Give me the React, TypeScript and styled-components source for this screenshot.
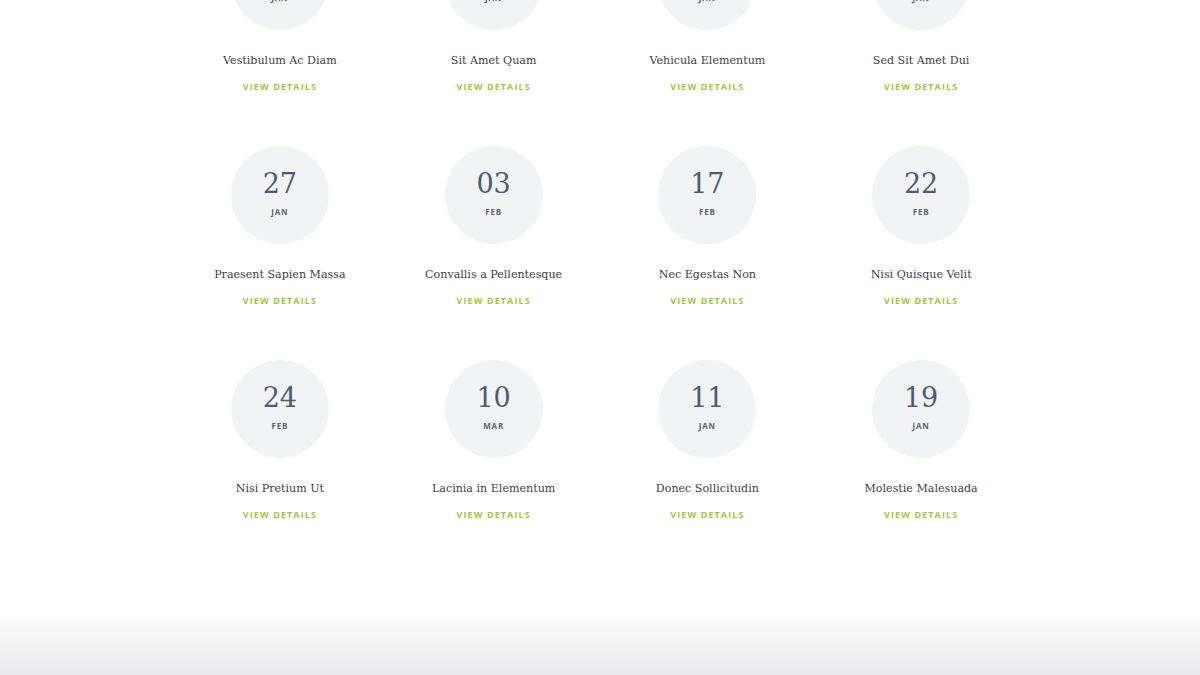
import React from "react";
import styled, { createGlobalStyle } from "styled-components";

const Global = createGlobalStyle`
  html, body { margin: 0; padding: 0; background: #ffffff; }
  body { width: 1200px; height: 675px; overflow: hidden; position: relative; }
`;

const Page = styled.div`
  width: 1200px;
  height: 675px;
  overflow: hidden;
  display: flex;
  flex-direction: column;
  background: #ffffff;
`;

const Section = styled.section`
  flex: 1;
  display: flex;
  justify-content: center;
  align-items: flex-start;
`;

const Grid = styled.div`
  margin-top: -68px;
  margin-left: 1px;
  width: 855px;
  display: grid;
  grid-template-columns: repeat(4, 1fr);
  row-gap: 52px;
`;

const Item = styled.div`
  display: flex;
  flex-direction: column;
  align-items: center;
`;

const Circle = styled.div`
  width: 98px;
  height: 98px;
  border-radius: 50%;
  background: #f1f3f5;
  display: flex;
  flex-direction: column;
  align-items: center;
  justify-content: center;
`;

const Day = styled.div`
  font-family: "DejaVu Serif", "Liberation Serif", serif;
  font-size: 27px;
  line-height: 32px;
  color: #4b5b78;
  margin-top: -6px;
`;

const Month = styled.div`
  font-family: "Open Sans", "Liberation Sans", sans-serif;
  font-size: 8px;
  font-weight: 700;
  letter-spacing: 0.8px;
  line-height: 10px;
  color: #5f636a;
  margin-top: 7px;
`;

const Title = styled.div`
  margin-top: 21px;
  font-family: "DejaVu Serif", "Liberation Serif", serif;
  font-size: 11.1px;
  line-height: 20px;
  color: #404043;
`;

const Link = styled.a`
  margin-top: 9px;
  font-family: "Open Sans", "Liberation Sans", sans-serif;
  font-size: 9px;
  font-weight: 700;
  letter-spacing: 1.1px;
  line-height: 14px;
  color: #a6c43c;
  text-decoration: none;
`;

const Footer = styled.div`
  height: 62px;
  background: linear-gradient(to bottom, #ffffff 0%, #f6f6f7 35%, #ebebed 100%);
`;

const events = [
  { day: "15", month: "JAN", title: "Vestibulum Ac Diam" },
  { day: "20", month: "JAN", title: "Sit Amet Quam" },
  { day: "22", month: "JAN", title: "Vehicula Elementum" },
  { day: "25", month: "JAN", title: "Sed Sit Amet Dui" },
  { day: "27", month: "JAN", title: "Praesent Sapien Massa" },
  { day: "03", month: "FEB", title: "Convallis a Pellentesque" },
  { day: "17", month: "FEB", title: "Nec Egestas Non" },
  { day: "22", month: "FEB", title: "Nisi Quisque Velit" },
  { day: "24", month: "FEB", title: "Nisi Pretium Ut" },
  { day: "10", month: "MAR", title: "Lacinia in Elementum" },
  { day: "11", month: "JAN", title: "Donec Sollicitudin" },
  { day: "19", month: "JAN", title: "Molestie Malesuada" },
];

export default function App() {
  return (
    <Page>
      <Global />
      <Section>
        <Grid>
          {events.map((e, i) => (
            <Item key={i}>
              <Circle>
                <Day>{e.day}</Day>
                <Month>{e.month}</Month>
              </Circle>
              <Title>{e.title}</Title>
              <Link href="#">VIEW DETAILS</Link>
            </Item>
          ))}
        </Grid>
      </Section>
      <Footer />
    </Page>
  );
}
